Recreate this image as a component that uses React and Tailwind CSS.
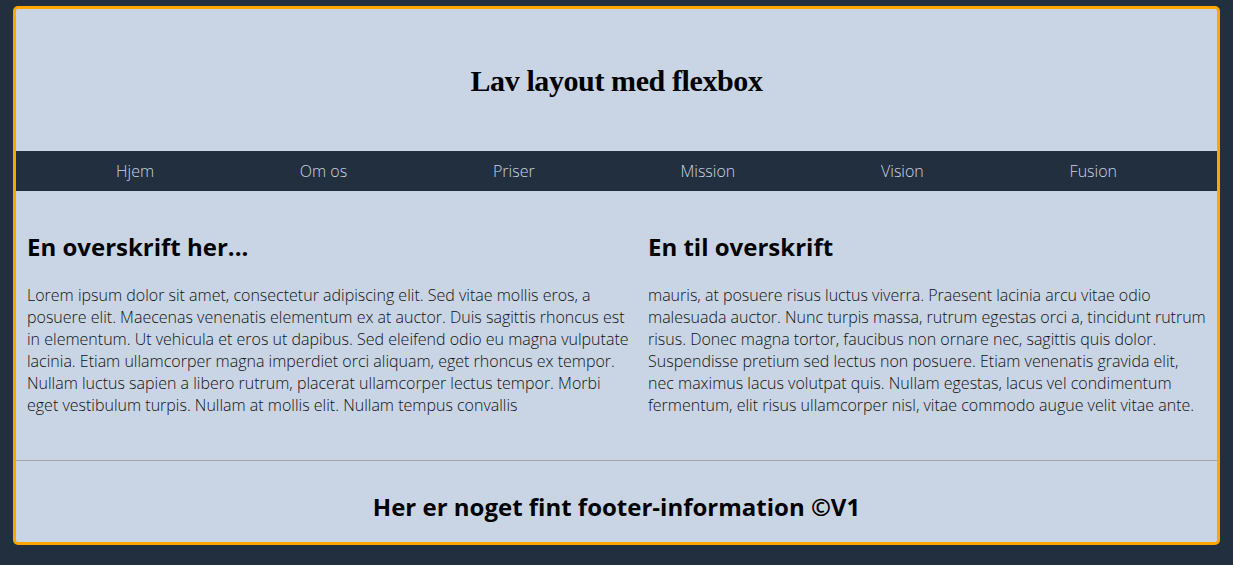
const navItems = ['Hjem', 'Om os', 'Priser', 'Mission', 'Vision', 'Fusion'];

export default function App() {
  return (
    <div className="min-h-[565px] bg-[#222f3e] pt-[6px] pb-[20px] px-[13px]" style={{ fontFamily: '"Open Sans", sans-serif' }}>
      <div className="overflow-hidden rounded-[5px] border-[3px] border-[#ffa500] bg-[#c9d5e5]">
        <header className="flex h-[142px] items-center justify-center">
          <h1
            className="text-[30px] font-bold text-black tracking-[-0.4px]"
            style={{ fontFamily: '"Liberation Serif", serif' }}
          >
            Lav layout med flexbox
          </h1>
        </header>

        <nav className="flex h-[40px] items-center justify-between bg-[#222f3e] px-[100px] text-[16px] font-light leading-[22px] text-[#c9d5e5]">
          {navItems.map((item) => (
            <a key={item} href="#">
              {item}
            </a>
          ))}
        </nav>

        <main className="flex gap-x-[15px] pl-[11px] pr-[9px] pt-[40px] pb-[44px]">
          <section className="w-[606px] shrink-0">
            <h2 className="text-[24px] font-bold leading-[32px] text-black">En overskrift her...</h2>
            <p className="mt-[21px] text-[16px] font-light leading-[22px] text-[#111]">
              Lorem ipsum dolor sit amet, consectetur adipiscing elit. Sed vitae mollis eros, a posuere elit. Maecenas
              venenatis elementum ex at auctor. Duis sagittis rhoncus est in elementum. Ut vehicula et eros ut dapibus.
              Sed eleifend odio eu magna vulputate lacinia. Etiam ullamcorper magna imperdiet orci aliquam, eget rhoncus
              ex tempor. Nullam luctus sapien a libero rutrum, placerat ullamcorper lectus tempor. Morbi eget vestibulum
              turpis. Nullam at mollis elit. Nullam tempus convallis
            </p>
          </section>
          <section className="w-[559px] shrink-0">
            <h2 className="text-[24px] font-bold leading-[32px] text-black">En til overskrift</h2>
            <p className="mt-[21px] text-[16px] font-light leading-[22px] text-[#111]">
              mauris, at posuere risus luctus viverra. Praesent lacinia arcu vitae odio malesuada auctor. Nunc turpis
              massa, rutrum egestas orci a, tincidunt rutrum risus. Donec magna tortor, faucibus non ornare nec, sagittis
              quis dolor. Suspendisse pretium sed lectus non posuere. Etiam venenatis gravida elit, nec maximus lacus
              volutpat quis. Nullam egestas, lacus vel condimentum fermentum, elit risus ullamcorper nisl, vitae commodo
              augue velit vitae ante.
            </p>
          </section>
        </main>

        <footer className="border-t border-[#a3a3a3] pt-[30px] pb-[19px] text-center">
          <h3 className="text-[24px] font-bold leading-[32px] text-black">Her er noget fint footer-information ©V1</h3>
        </footer>
      </div>
    </div>
  );
}
